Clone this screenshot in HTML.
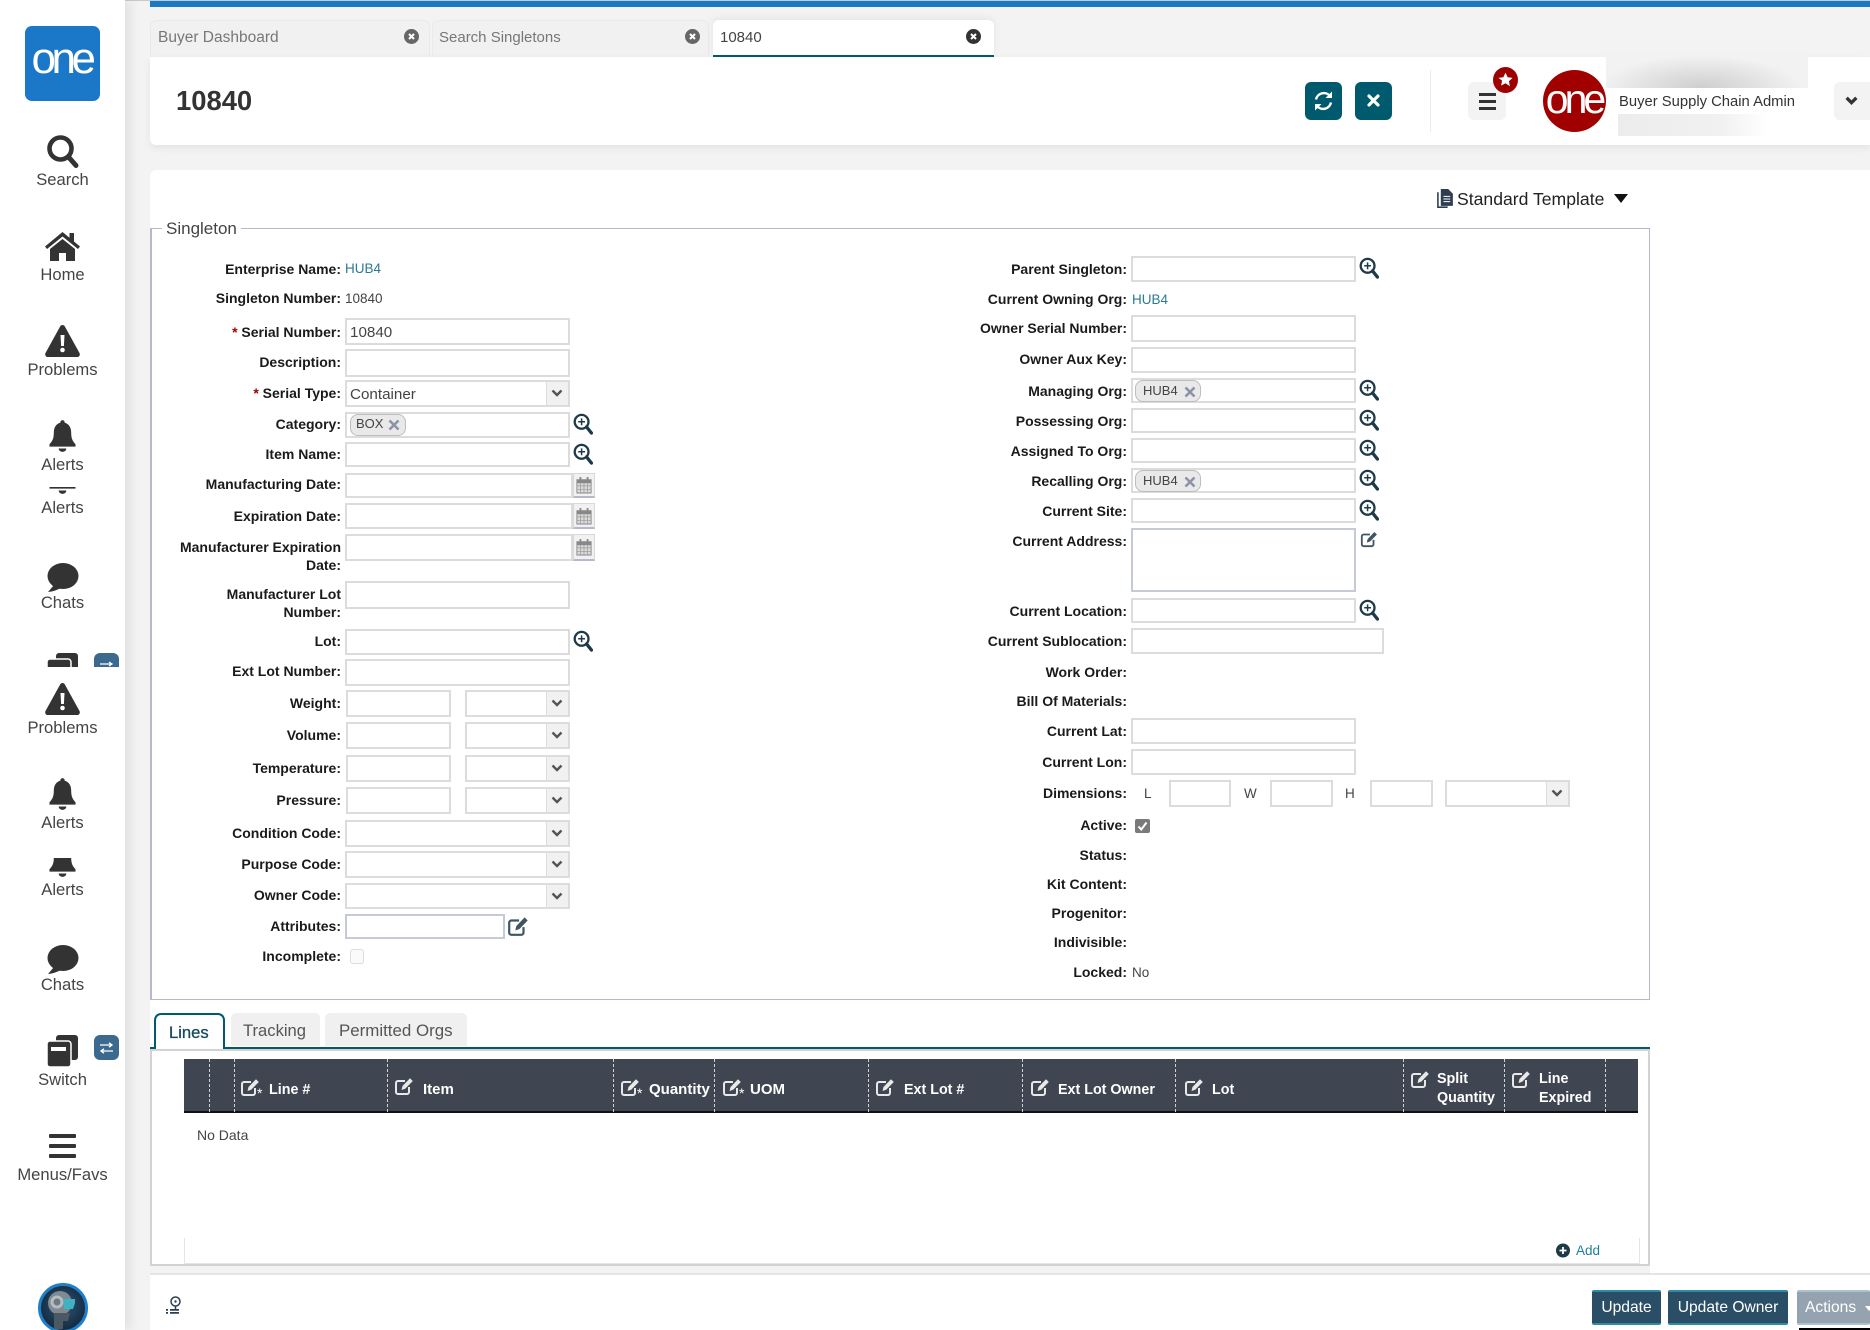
<!DOCTYPE html>
<html><head><meta charset="utf-8"><title>10840</title>
<style>
html,body{margin:0;padding:0}
body{width:1870px;height:1330px;position:relative;overflow:hidden;background:#f3f3f3;font-family:"Liberation Sans",sans-serif;color:#333}
div,span,svg{position:absolute;box-sizing:border-box}
.n{white-space:nowrap}
.side{left:0;top:0;width:125px;height:1330px;background:#fff;box-shadow:6px 0 10px rgba(0,0,0,.07);overflow:hidden}
.st{left:0;width:125px;text-align:center;font-size:16.6px;line-height:20px;color:#444;white-space:nowrap;margin-top:1px}
.tab{top:20px;height:37px;background:#f1f1f1;border-radius:6px 6px 0 0;border:1px solid #eaeaea;border-bottom:0}
.tt{font-size:15px;line-height:20px;top:28px;color:#777;white-space:nowrap}
.l{left:0;width:341px;text-align:right;font-weight:bold;font-size:14px;line-height:18px;color:#1a1a1a;white-space:nowrap}
.r{left:600px;width:527px;text-align:right;font-weight:bold;font-size:14px;line-height:18px;color:#1a1a1a;white-space:nowrap}
.i{background:#fff;border:2px solid #dcdcdc}
.a{left:345px;width:225px}
.b{left:1131px;width:225px}
.sb{top:0;right:0;bottom:0;width:22px;background:#f1f1f1;border-left:1px solid #ddd}
.v{font-size:13.5px;line-height:18px;color:#444;white-space:nowrap;margin-top:1px}
.in{font-size:15.2px;line-height:20px;color:#444;white-space:nowrap;margin-top:1px}
.chip{height:22px;background:#e9e9e9;border:1px solid #bdbdbd;border-radius:8px;font-size:13px;line-height:19px;color:#444;padding-left:7px;white-space:nowrap}
.th{color:#fff;font-weight:bold;font-size:14.3px;line-height:18px;white-space:nowrap;margin-top:1px}
.dash{top:1059px;height:53px;width:0;border-left:1px dashed #cfd2d6}
.btn{top:1290px;height:35px;background:#2a4e66;border-top:2px solid #2f8ca6;border-bottom:2px solid #2f8ca6;border-radius:2px;color:#fff;font-size:15.6px;line-height:31px;text-align:center;white-space:nowrap}
.ast{color:#fff;font-size:14px;line-height:14px}
</style></head>
<body>
<svg width="0" height="0" style="left:0;top:0">
<defs>
<symbol id="z" viewBox="0 0 20 22"><circle cx="8.6" cy="8.8" r="6.9" fill="none" stroke="#1e3a47" stroke-width="2.3"/><path d="M13.6 14L18.4 20" stroke="#1e3a47" stroke-width="3.4" stroke-linecap="round"/><path d="M8.6 5.4v6.8M5.2 8.8H12" stroke="#1e3a47" stroke-width="1.5"/></symbol>
<symbol id="e" viewBox="0 0 20 20"><path d="M15 11v5a2 2 0 0 1-2 2H4a2 2 0 0 1-2-2V7a2 2 0 0 1 2-2h7" fill="none" stroke="currentColor" stroke-width="2"/><path d="M7.5 14L8.5 10L16 2.2L18.8 5L11.2 12.8Z" fill="currentColor"/></symbol>
<symbol id="c" viewBox="0 0 18 20"><path d="M1 4h16v15H1z" fill="#dadada" stroke="#888"/><path d="M1 4h16v4H1z" fill="#888"/><path d="M5 1v5M13 1v5" stroke="#888" stroke-width="2"/><path d="M1 11h16M1 15h16M5 8v11M9 8v11M13 8v11" stroke="#999" stroke-width=".8"/></symbol>
<symbol id="d" viewBox="0 0 12 8"><path d="M1.500 1.500L6 6L10.500 1.500" fill="none" stroke="#555" stroke-width="2.400"/></symbol>
<symbol id="bell" viewBox="0 0 28 33"><path d="M14 0a2.2 2.2 0 0 1 2.2 2.6C21 4 23 8 23 13c0 6 1.5 9 4.5 12v2.500H.5V25C3.500 22 5 19 5 13c0-5 2-9 6.800-10.400A2.200 2.200 0 0 1 14 0z" fill="#333"/><path d="M10 29.500h8a4 3.500 0 0 1-8 0z" fill="#333"/></symbol>
<symbol id="warn" viewBox="0 0 35 32"><path d="M17.500 0c1 0 1.800.5 2.300 1.400L34.500 28c.9 1.800-.2 4-2.300 4H2.800C.7 32-.4 29.800.5 28L15.200 1.400c.5-.9 1.300-1.400 2.300-1.400z" fill="#333"/><path d="M15.500 10h4l-.6 11h-2.800z" fill="#fff"/><circle cx="17.500" cy="25" r="2.300" fill="#fff"/></symbol>
<symbol id="chat" viewBox="0 0 32 29"><ellipse cx="16" cy="13" rx="15.500" ry="13" fill="#333"/><path d="M7 22L1 29C6 28.500 10 27 14 25z" fill="#333"/></symbol>
</defs>
</svg>

<!-- top bar -->
<div style="left:0;top:0;width:1870px;height:1px;background:#c8c8c8"></div>
<div style="left:150px;top:1px;width:1720px;height:6px;background:#1b78c4"></div>

<!-- sidebar -->
<div class="side">
 <div style="left:25px;top:26px;width:75px;height:75px;background:#1b78c8;border-radius:7px;overflow:hidden"><div class="n" style="left:-1px;width:75px;text-align:center;top:8px;font-size:44px;line-height:50px;letter-spacing:-4.500px;color:#fff">one</div></div>
 <svg style="left:47px;top:135px" width="32" height="33" viewBox="0 0 32 33"><circle cx="13.500" cy="13.500" r="11" fill="none" stroke="#333" stroke-width="4.600"/><path d="M21.500 22L29 30.500" stroke="#333" stroke-width="5" stroke-linecap="round"/></svg>
 <div class="st" style="top:169px">Search</div>
 <svg style="left:45px;top:232px" width="35" height="29" viewBox="0 0 35 29"><path d="M17.500 0L0 14.500l2 2.500L17.500 4.500 33 17l2-2.500-6-5V1h-4.500v4.800z" fill="#333"/><path d="M5 17L17.500 7 30 17v12h-9v-8h-7v8H5z" fill="#333"/></svg>
 <div class="st" style="top:264px">Home</div>
 <svg style="left:45px;top:325px" width="35" height="32"><use href="#warn"/></svg>
 <div class="st" style="top:359px">Problems</div>
 <svg style="left:49px;top:420px" width="27" height="32"><use href="#bell"/></svg>
 <div class="st" style="top:454px">Alerts</div>
 <div style="left:0;top:487px;width:125px;height:10px;overflow:hidden"><svg style="left:49px;top:-25px" width="27" height="32"><use href="#bell"/></svg></div>
 <div class="st" style="top:497px">Alerts</div>
 <svg style="left:47px;top:563px" width="32" height="29"><use href="#chat"/></svg>
 <div class="st" style="top:592px">Chats</div>
 <div style="left:0;top:653px;width:125px;height:14px;overflow:hidden">
  <svg style="left:47px;top:0" width="32" height="32" viewBox="0 0 32 32"><rect x="9" y="0" width="22" height="25" rx="3" fill="#333"/><rect x="0" y="6" width="24" height="26" rx="3" fill="#333" stroke="#fff" stroke-width="1.500"/></svg>
  <div style="left:94px;top:0;width:25px;height:25px;background:#3b6a8e;border-radius:6px"></div>
  <svg style="left:99px;top:8px" width="15" height="10" viewBox="0 0 15 10"><path d="M1 3h12M10 1l3 2-3 2M14 8H2" fill="none" stroke="#fff" stroke-width="1.300"/></svg>
 </div>
 <svg style="left:45px;top:683px" width="35" height="32"><use href="#warn"/></svg>
 <div class="st" style="top:717px">Problems</div>
 <svg style="left:49px;top:778px" width="27" height="32"><use href="#bell"/></svg>
 <div class="st" style="top:812px">Alerts</div>
 <div style="left:0;top:858px;width:125px;height:20px;overflow:hidden"><svg style="left:49px;top:-13px" width="27" height="32"><use href="#bell"/></svg></div>
 <div class="st" style="top:879px">Alerts</div>
 <svg style="left:47px;top:945px" width="32" height="29"><use href="#chat"/></svg>
 <div class="st" style="top:974px">Chats</div>
 <svg style="left:47px;top:1035px" width="32" height="32" viewBox="0 0 32 32"><rect x="9" y="0" width="22" height="25" rx="3" fill="#333"/><rect x="0" y="6" width="24" height="26" rx="3" fill="#333" stroke="#fff" stroke-width="1.500"/><rect x="4" y="12" width="15" height="4" fill="#fff"/></svg>
 <div style="left:94px;top:1035px;width:25px;height:25px;background:#3b6a8e;border-radius:6px"></div>
 <svg style="left:99px;top:1042px" width="15" height="12" viewBox="0 0 15 12"><path d="M1 3h12M10 .8l3 2.200-3 2.200M14 9H2M5 6.800L2 9l3 2.200" fill="none" stroke="#fff" stroke-width="1.300"/></svg>
 <div class="st" style="top:1069px">Switch</div>
 <div style="left:49px;top:1134px;width:27px;height:4px;background:#333;border-radius:1px"></div>
 <div style="left:49px;top:1144px;width:27px;height:4px;background:#333;border-radius:1px"></div>
 <div style="left:49px;top:1154px;width:27px;height:4px;background:#333;border-radius:1px"></div>
 <div class="st" style="top:1164px">Menus/Favs</div>
 <svg style="left:38px;top:1283px" width="50" height="50" viewBox="0 0 50 50"><defs><radialGradient id="ag" cx=".5" cy=".45" r=".6"><stop offset="0" stop-color="#2f5675"/><stop offset="1" stop-color="#0f2438"/></radialGradient></defs><circle cx="25" cy="25" r="23.500" fill="url(#ag)" stroke="#1f7fc9" stroke-width="3"/><circle cx="22" cy="20" r="12" fill="#7f8a92"/><circle cx="19" cy="19" r="6.500" fill="#b5bcc0"/><circle cx="19" cy="19" r="3.500" fill="#6e7a82"/><path d="M25 16h12v4l-2 6H26z" fill="#3fb3c2"/><path d="M16 30h16l-2 8h-5v8H16z" fill="#4d5962"/></svg>
</div>

<!-- tabs -->
<div class="tab" style="left:150px;width:280px"></div>
<div class="tt" style="left:158px;font-size:15.500px">Buyer Dashboard</div>
<svg style="left:404px;top:29px" width="15" height="15" viewBox="0 0 15 15"><circle cx="7.500" cy="7.500" r="7.500" fill="#666"/><path d="M5 5l5 5M10 5l-5 5" stroke="#fff" stroke-width="2"/></svg>
<div class="tab" style="left:432px;width:277px"></div>
<div class="tt" style="left:439px">Search Singletons</div>
<svg style="left:685px;top:29px" width="15" height="15" viewBox="0 0 15 15"><circle cx="7.500" cy="7.500" r="7.500" fill="#666"/><path d="M5 5l5 5M10 5l-5 5" stroke="#fff" stroke-width="2"/></svg>
<div style="left:713px;top:20px;width:281px;height:37px;background:#fff;border-radius:6px 6px 0 0;border-bottom:2px solid #005a6e;box-shadow:0 -2px 8px rgba(0,0,0,.06)"></div>
<div class="tt" style="left:720px;color:#444">10840</div>
<svg style="left:966px;top:29px" width="15" height="15" viewBox="0 0 15 15"><circle cx="7.500" cy="7.500" r="7.500" fill="#333"/><path d="M5 5l5 5M10 5l-5 5" stroke="#fff" stroke-width="2"/></svg>

<!-- header card -->
<div style="left:150px;top:57px;width:1720px;height:88px;background:#fff;border-radius:0 0 0 6px;box-shadow:0 3px 8px rgba(0,0,0,.07)"></div>
<div class="n" style="left:176px;top:84px;font-size:27.400px;line-height:34px;font-weight:bold;color:#333">10840</div>
<div style="left:1305px;top:82px;width:37px;height:38px;background:#005a6e;border-radius:6px"></div>
<svg style="left:1313px;top:90px" width="21" height="22" viewBox="0 0 21 22"><path d="M3 9.500a8 8 0 0 1 14-3.500M18 12.500a8 8 0 0 1-14 3.500" fill="none" stroke="#fff" stroke-width="2.400"/><path d="M19 1.500v6.500h-6.500zM2 20.500V14h6.500z" fill="#fff"/></svg>
<div style="left:1355px;top:82px;width:37px;height:38px;background:#005a6e;border-radius:6px"></div>
<svg style="left:1367px;top:94px" width="13" height="13" viewBox="0 0 13 13"><path d="M2 2l9 9M11 2l-9 9" stroke="#fff" stroke-width="3.200" stroke-linecap="round"/></svg>
<div style="left:1430px;top:70px;width:1px;height:62px;background:#ececec"></div>
<div style="left:1468px;top:82px;width:38px;height:38px;background:#f3f3f3;border-radius:6px"></div>
<div style="left:1479px;top:93px;width:17px;height:3px;background:#333"></div>
<div style="left:1479px;top:100px;width:17px;height:3px;background:#333"></div>
<div style="left:1479px;top:107px;width:17px;height:3px;background:#333"></div>
<div style="left:1493px;top:67px;width:25px;height:26px;background:#9d0000;border-radius:50%"></div>
<svg style="left:1498px;top:72px" width="15" height="15" viewBox="0 0 24 24"><path d="M12 1l3.400 7.300 7.900 1-5.800 5.500 1.500 7.900L12 18l-7 3.700 1.500-7.900L.7 9.300l7.900-1z" fill="#fff"/></svg>
<div style="left:1543px;top:70px;width:63px;height:62px;background:#a00000;border-radius:50%;overflow:hidden"><div class="n" style="left:0;width:62px;text-align:center;top:6px;font-size:41px;line-height:46px;letter-spacing:-4px;color:#fff">one</div></div>
<div style="left:1606px;top:50px;width:202px;height:38px;background:radial-gradient(ellipse 50% 85% at 47% 100%,#cecece,#f2f2f2 100%)"></div>
<div class="n" style="left:1619px;top:93px;font-size:14.800px;line-height:18px;color:#333">Buyer Supply Chain Admin</div>
<div style="left:1618px;top:114px;width:149px;height:22px;background:linear-gradient(90deg,#ececec,#f1f1f1 70%,#fff)"></div>
<div style="left:1834px;top:82px;width:36px;height:38px;background:#f3f3f3;border-radius:6px 0 0 6px"></div>
<svg style="left:1845px;top:96px" width="13" height="9" viewBox="0 0 12 8"><path d="M1.500 1.500L6 6L10.500 1.500" fill="none" stroke="#333" stroke-width="3"/></svg>

<!-- main card -->
<div style="left:150px;top:170px;width:1720px;height:1095px;background:#fff;border-radius:6px 0 0 0"></div>
<div style="left:1650px;top:1265px;width:220px;height:8px;background:#fff"></div>
<svg style="left:1436px;top:188px" width="18" height="21" viewBox="0 0 17 20"><path d="M2.500 4H1v15h10v-1.500H2.500z" fill="#2c3e50"/><path d="M4.500 1h7l4.500 4.500V17H4.500z" fill="#2c3e50"/><path d="M7 8h6.500M7 10.500h6.500M7 13h6.500" stroke="#fff" stroke-width="1"/></svg>
<div class="n" style="left:1457px;top:189px;font-size:17.600px;line-height:20px;color:#222">Standard Template</div>
<svg style="left:1614px;top:194px" width="14" height="9" viewBox="0 0 14 9"><path d="M0 0h14L7 9z" fill="#111"/></svg>

<!-- fieldset -->
<div style="left:150px;top:228px;width:1500px;height:772px;border:1px solid #b5b9cb;border-left-width:2px"></div>
<div class="n" style="left:162px;top:219px;padding:0 4px;background:#fff;font-size:17px;line-height:20px;color:#444">Singleton</div>

<!-- left column -->
<div class="l" style="top:260px">Enterprise Name:</div><div class="v" style="left:345px;top:259px;color:#2b7a94">HUB4</div>
<div class="l" style="top:289px">Singleton Number:</div><div class="v" style="left:345px;top:289px">10840</div>
<div class="l" style="top:323px"><span style="position:static;color:#9d0000">* </span>Serial Number:</div>
<div class="i a" style="top:318px;height:27px"></div><div class="in" style="left:350px;top:322px">10840</div>
<div class="l" style="top:353px">Description:</div><div class="i a" style="top:349px;height:28px"></div>
<div class="l" style="top:384px"><span style="position:static;color:#9d0000">* </span>Serial Type:</div>
<div class="i a" style="top:380px;height:27px"><div class="sb"></div><svg style="left:204px;top:7px" width="12" height="8"><use href="#d"/></svg></div><div class="in" style="left:350px;top:384px">Container</div>
<div class="l" style="top:415px">Category:</div><div class="i a" style="top:412px;height:26px"></div>
<div class="chip" style="left:350px;top:414px;width:56px;padding-left:5px;line-height:18px">BOX</div>
<svg style="left:388px;top:419px" width="12" height="12" viewBox="0 0 12 12"><path d="M1.500 1.500l9 9M10.500 1.500l-9 9" stroke="#8c93a6" stroke-width="2.600"/></svg>
<svg style="left:573px;top:413px" width="20" height="22"><use href="#z"/></svg>
<div class="l" style="top:445px">Item Name:</div><div class="i a" style="top:442px;height:25px"></div>
<svg style="left:573px;top:443px" width="20" height="22"><use href="#z"/></svg>
<div class="l" style="top:475px">Manufacturing Date:</div><div class="i a" style="top:473px;height:25px;width:228px"></div>
<div style="left:573px;top:473px;width:22px;height:25px;background:#f1f1f1;border:1px solid #d8d8d8;border-bottom:2px solid #b5b9cb"></div><svg style="left:576px;top:476px" width="16" height="18"><use href="#c"/></svg>
<div class="l" style="top:507px">Expiration Date:</div><div class="i a" style="top:503px;height:26px;width:228px"></div>
<div style="left:573px;top:503px;width:22px;height:26px;background:#f1f1f1;border:1px solid #d8d8d8;border-bottom:2px solid #b5b9cb"></div><svg style="left:576px;top:507px" width="16" height="18"><use href="#c"/></svg>
<div class="l" style="top:538px">Manufacturer Expiration</div><div class="l" style="top:556px">Date:</div><div class="i a" style="top:534px;height:27px;width:228px"></div>
<div style="left:573px;top:534px;width:22px;height:27px;background:#f1f1f1;border:1px solid #d8d8d8;border-bottom:2px solid #b5b9cb"></div><svg style="left:576px;top:538px" width="16" height="18"><use href="#c"/></svg>
<div class="l" style="top:585px">Manufacturer Lot</div><div class="l" style="top:603px">Number:</div><div class="i a" style="top:581px;height:28px"></div>
<div class="l" style="top:632px">Lot:</div><div class="i a" style="top:629px;height:26px"></div>
<svg style="left:573px;top:630px" width="20" height="22"><use href="#z"/></svg>
<div class="l" style="top:662px">Ext Lot Number:</div><div class="i a" style="top:659px;height:27px"></div>
<div class="l" style="top:694px">Weight:</div><div class="i" style="left:346px;top:690px;width:105px;height:27px"></div>
<div class="i" style="left:465px;top:690px;width:105px;height:27px"><div class="sb"></div><svg style="left:84px;top:7px" width="12" height="8"><use href="#d"/></svg></div>
<div class="l" style="top:726px">Volume:</div><div class="i" style="left:346px;top:722px;width:105px;height:27px"></div>
<div class="i" style="left:465px;top:722px;width:105px;height:27px"><div class="sb"></div><svg style="left:84px;top:7px" width="12" height="8"><use href="#d"/></svg></div>
<div class="l" style="top:759px">Temperature:</div><div class="i" style="left:346px;top:755px;width:105px;height:27px"></div>
<div class="i" style="left:465px;top:755px;width:105px;height:27px"><div class="sb"></div><svg style="left:84px;top:7px" width="12" height="8"><use href="#d"/></svg></div>
<div class="l" style="top:791px">Pressure:</div><div class="i" style="left:346px;top:787px;width:105px;height:27px"></div>
<div class="i" style="left:465px;top:787px;width:105px;height:27px"><div class="sb"></div><svg style="left:84px;top:7px" width="12" height="8"><use href="#d"/></svg></div>
<div class="l" style="top:824px">Condition Code:</div>
<div class="i a" style="top:820px;height:27px"><div class="sb"></div><svg style="left:204px;top:7px" width="12" height="8"><use href="#d"/></svg></div>
<div class="l" style="top:855px">Purpose Code:</div>
<div class="i a" style="top:851px;height:27px"><div class="sb"></div><svg style="left:204px;top:7px" width="12" height="8"><use href="#d"/></svg></div>
<div class="l" style="top:886px">Owner Code:</div>
<div class="i a" style="top:883px;height:26px"><div class="sb"></div><svg style="left:204px;top:7px" width="12" height="8"><use href="#d"/></svg></div>
<div class="l" style="top:917px">Attributes:</div><div class="i" style="left:345px;top:914px;width:160px;height:25px;border-color:#c6c9d6"></div>
<svg style="left:507px;top:915px;color:#3f5563" width="22" height="22"><use href="#e"/></svg>
<div class="l" style="top:947px">Incomplete:</div><div style="left:350px;top:949px;width:14px;height:15px;border:1px solid #ddd;border-radius:3px;background:#fafafa"></div>

<!-- right column -->
<div class="r" style="top:260px">Parent Singleton:</div><div class="i b" style="top:256px;height:26px"></div>
<svg style="left:1359px;top:257px" width="20" height="22"><use href="#z"/></svg>
<div class="r" style="top:290px">Current Owning Org:</div><div class="v" style="left:1132px;top:290px;color:#2b7a94">HUB4</div>
<div class="r" style="top:319px">Owner Serial Number:</div><div class="i b" style="top:315px;height:27px"></div>
<div class="r" style="top:350px">Owner Aux Key:</div><div class="i b" style="top:347px;height:26px"></div>
<div class="r" style="top:382px">Managing Org:</div><div class="i b" style="top:378px;height:25px"></div>
<div class="chip" style="left:1135px;top:380px;width:66px">HUB4</div>
<svg style="left:1184px;top:386px" width="12" height="12" viewBox="0 0 12 12"><path d="M1.500 1.500l9 9M10.500 1.500l-9 9" stroke="#8c93a6" stroke-width="2.600"/></svg>
<svg style="left:1359px;top:379px" width="20" height="22"><use href="#z"/></svg>
<div class="r" style="top:412px">Possessing Org:</div><div class="i b" style="top:408px;height:25px"></div>
<svg style="left:1359px;top:409px" width="20" height="22"><use href="#z"/></svg>
<div class="r" style="top:442px">Assigned To Org:</div><div class="i b" style="top:438px;height:25px"></div>
<svg style="left:1359px;top:439px" width="20" height="22"><use href="#z"/></svg>
<div class="r" style="top:472px">Recalling Org:</div><div class="i b" style="top:468px;height:25px"></div>
<div class="chip" style="left:1135px;top:470px;width:66px">HUB4</div>
<svg style="left:1184px;top:476px" width="12" height="12" viewBox="0 0 12 12"><path d="M1.500 1.500l9 9M10.500 1.500l-9 9" stroke="#8c93a6" stroke-width="2.600"/></svg>
<svg style="left:1359px;top:469px" width="20" height="22"><use href="#z"/></svg>
<div class="r" style="top:502px">Current Site:</div><div class="i b" style="top:498px;height:25px"></div>
<svg style="left:1359px;top:499px" width="20" height="22"><use href="#z"/></svg>
<div class="r" style="top:532px">Current Address:</div><div class="i b" style="top:528px;height:64px;border-color:#c6c9d6"></div>
<svg style="left:1360px;top:530px;color:#3f5563" width="18" height="18"><use href="#e"/></svg>
<div class="r" style="top:602px">Current Location:</div><div class="i b" style="top:598px;height:25px"></div>
<svg style="left:1359px;top:599px" width="20" height="22"><use href="#z"/></svg>
<div class="r" style="top:632px">Current Sublocation:</div><div class="i" style="left:1131px;top:628px;width:253px;height:26px"></div>
<div class="r" style="top:663px">Work Order:</div>
<div class="r" style="top:692px">Bill Of Materials:</div>
<div class="r" style="top:722px">Current Lat:</div><div class="i b" style="top:718px;height:26px"></div>
<div class="r" style="top:753px">Current Lon:</div><div class="i b" style="top:749px;height:26px"></div>
<div class="r" style="top:784px">Dimensions:</div>
<div class="v" style="left:1144px;top:784px">L</div><div class="i" style="left:1169px;top:780px;width:62px;height:27px"></div>
<div class="v" style="left:1244px;top:784px">W</div><div class="i" style="left:1270px;top:780px;width:63px;height:27px"></div>
<div class="v" style="left:1345px;top:784px">H</div><div class="i" style="left:1370px;top:780px;width:63px;height:27px"></div>
<div class="i" style="left:1445px;top:780px;width:125px;height:27px"><div class="sb"></div><svg style="left:104px;top:7px" width="12" height="8"><use href="#d"/></svg></div>
<div class="r" style="top:816px">Active:</div>
<div style="left:1135px;top:819px;width:15px;height:14px;background:#7a7a7a;border-radius:2px"></div>
<svg style="left:1137px;top:821px" width="11" height="10" viewBox="0 0 11 10"><path d="M1.500 5.500L4.300 8.500L9.500 1.500" fill="none" stroke="#fff" stroke-width="2"/></svg>
<div class="r" style="top:846px">Status:</div>
<div class="r" style="top:875px">Kit Content:</div>
<div class="r" style="top:904px">Progenitor:</div>
<div class="r" style="top:933px">Indivisible:</div>
<div class="r" style="top:963px">Locked:</div><div class="v" style="left:1132px;top:963px">No</div>

<!-- lower tabs -->
<div style="left:231px;top:1013px;width:89px;height:33px;background:#f0f0f0;border-radius:5px 5px 0 0"></div>
<div class="n" style="left:243px;top:1021px;font-size:16.600px;line-height:20px;color:#555">Tracking</div>
<div style="left:325px;top:1013px;width:142px;height:33px;background:#f0f0f0;border-radius:5px 5px 0 0"></div>
<div class="n" style="left:339px;top:1021px;font-size:16.900px;line-height:20px;color:#555">Permitted Orgs</div>
<div style="left:150px;top:1047px;width:1500px;height:2px;background:#005a6e"></div>
<div style="left:154px;top:1013px;width:71px;height:37px;background:#fff;border:2px solid #005a6e;border-bottom:0;border-radius:7px 7px 0 0"></div>
<div class="n" style="left:169px;top:1023px;font-size:16.600px;line-height:20px;color:#164a5c;-webkit-text-stroke:.3px #164a5c">Lines</div>

<!-- panel -->
<div style="left:150px;top:1049px;width:1500px;height:217px;border:2px solid #d2d2d2;background:transparent"></div>
<div style="left:184px;top:1059px;width:1454px;height:54px;background:#3f4651;border-bottom:2px solid #111"></div>
<div class="dash" style="left:209px"></div><div class="dash" style="left:234px"></div><div class="dash" style="left:387px"></div><div class="dash" style="left:613px"></div><div class="dash" style="left:714px"></div><div class="dash" style="left:868px"></div><div class="dash" style="left:1022px"></div><div class="dash" style="left:1175px"></div><div class="dash" style="left:1403px"></div><div class="dash" style="left:1504px"></div><div class="dash" style="left:1605px"></div>

<svg style="left:240px;top:1077px;color:#e8e8e8" width="20" height="20"><use href="#e"/></svg><div class="ast" style="left:257px;top:1086px">*</div><div class="th" style="left:269px;top:1080px">Line #</div>
<svg style="left:394px;top:1076px;color:#e8e8e8" width="20" height="20"><use href="#e"/></svg><div class="th" style="left:423px;top:1080px;font-size:15px">Item</div>
<svg style="left:620px;top:1077px;color:#e8e8e8" width="20" height="20"><use href="#e"/></svg><div class="ast" style="left:637px;top:1086px">*</div><div class="th" style="left:649px;top:1080px;font-size:15px">Quantity</div>
<svg style="left:722px;top:1077px;color:#e8e8e8" width="20" height="20"><use href="#e"/></svg><div class="ast" style="left:739px;top:1086px">*</div><div class="th" style="left:750px;top:1080px;font-size:15px">UOM</div>
<svg style="left:875px;top:1077px;color:#e8e8e8" width="20" height="20"><use href="#e"/></svg><div class="th" style="left:904px;top:1080px">Ext Lot #</div>
<svg style="left:1030px;top:1077px;color:#e8e8e8" width="20" height="20"><use href="#e"/></svg><div class="th" style="left:1058px;top:1080px">Ext Lot Owner</div>
<svg style="left:1184px;top:1077px;color:#e8e8e8" width="20" height="20"><use href="#e"/></svg><div class="th" style="left:1212px;top:1080px">Lot</div>
<svg style="left:1410px;top:1069px;color:#e8e8e8" width="20" height="20"><use href="#e"/></svg><div class="th" style="left:1437px;top:1069px">Split</div><div class="th" style="left:1437px;top:1088px">Quantity</div>
<svg style="left:1511px;top:1069px;color:#e8e8e8" width="20" height="20"><use href="#e"/></svg><div class="th" style="left:1539px;top:1069px">Line</div><div class="th" style="left:1539px;top:1088px">Expired</div>

<div class="v" style="left:197px;top:1125px;font-size:14px">No Data</div>
<div style="left:184px;top:1238px;width:1px;height:26px;background:#e5e5e5"></div>
<div style="left:184px;top:1263px;width:1456px;height:1px;background:#e5e5e5"></div>
<div style="left:1639px;top:1238px;width:1px;height:26px;background:#e5e5e5"></div>
<svg style="left:1556px;top:1243px" width="14" height="15" viewBox="0 0 14 15"><circle cx="7" cy="7.500" r="7" fill="#1e3a47"/><path d="M7 4v7M3.500 7.500h7" stroke="#fff" stroke-width="1.800"/></svg>
<div class="v" style="left:1576px;top:1241px;color:#1f7f9f">Add</div>

<!-- footer -->
<div style="left:150px;top:1273px;width:1720px;height:57px;background:#fff;border-top:2px solid #e4e4e4"></div>
<svg style="left:165px;top:1296px" width="16" height="18" viewBox="0 0 16 18"><circle cx="10.500" cy="5.500" r="4.500" fill="none" stroke="#2c3e50" stroke-width="1.500"/><circle cx="10.500" cy="5.500" r="1.200" fill="#2c3e50"/><path d="M10.500 10v3" stroke="#2c3e50" stroke-width="1.500"/><path d="M1 13h2v1.800H1zM5 13h9v1.800H5zM1 16h2v1.800H1zM5 16h9v1.800H5z" fill="#2c3e50"/></svg>
<div class="btn" style="left:1592px;width:69px">Update</div>
<div class="btn" style="left:1668px;width:120px">Update Owner</div>
<div class="btn" style="left:1797px;width:73px;background:#94a3af;border-color:#a9c4cf;text-align:left;padding-left:8px">Actions</div>
<svg style="left:1865px;top:1306px" width="5" height="5" viewBox="0 0 5 5"><path d="M0 0h8L4 5z" fill="#fff"/></svg>
<div style="left:1799px;top:1328px;width:71px;height:2px;background:#000"></div>
</body></html>
